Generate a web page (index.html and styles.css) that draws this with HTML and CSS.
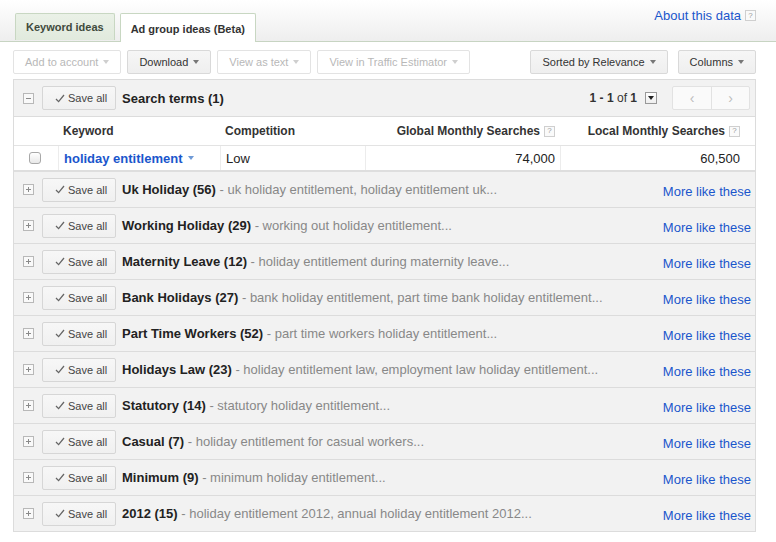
FILE: index.html
```html
<!DOCTYPE html>
<html>
<head>
<meta charset="utf-8">
<link rel="stylesheet" href="styles.css">
</head>
<body>
<div class="topbar">
  <div class="tabs">
    <div class="tab">Keyword ideas</div>
    <div class="tab active">Ad group ideas (Beta)</div>
  </div>
  <div class="about"><a class="link">About this data</a><span class="help">?</span></div>
</div>

<div class="toolbar">
  <span class="btn disabled">Add to account <i class="caret"></i></span>
  <span class="btn">Download <i class="caret"></i></span>
  <span class="btn disabled">View as text <i class="caret"></i></span>
  <span class="btn disabled">View in Traffic Estimator <i class="caret"></i></span>
  <span class="btn push">Sorted by Relevance <i class="caret"></i></span>
  <span class="btn wide-gap">Columns <i class="caret"></i></span>
</div>

<div class="panel">
  <div class="ghead">
    <svg class="pm" width="11" height="11" viewBox="0 0 11 11"><rect x="0.5" y="0.5" width="10" height="10" fill="#f9f9f9" stroke="#b8b8b8"/><path d="M3 5.5h5" stroke="#8a8a8a"/></svg>
    <span class="save"><svg width="10" height="9" viewBox="0 0 10 9"><path d="M1 5l2.6 2.6L9 1" fill="none" stroke="#666" stroke-width="1.3"/></svg>Save all</span>
    <span class="gtitle">Search terms (1)</span>
    <span class="pages"><b>1 - 1</b> of <b>1</b></span>
    <span class="ddbox"><i></i></span>
    <span class="pager"><span>&#8249;</span><span>&#8250;</span></span>
  </div>

  <div class="thead">
    <div class="c c1"></div>
    <div class="c c2">Keyword</div>
    <div class="c c3">Competition</div>
    <div class="c c4">Global Monthly Searches <span class="help">?</span></div>
    <div class="c c5">Local Monthly Searches <span class="help">?</span></div>
  </div>

  <div class="trow">
    <div class="c c1"><span class="cb"></span></div>
    <div class="c c2"><span class="kw">holiday entitlement</span><i class="kcaret"></i></div>
    <div class="c c3">Low</div>
    <div class="c c4">74,000</div>
    <div class="c c5">60,500</div>
  </div>

  <div class="group">
    <svg class="pm" width="11" height="11" viewBox="0 0 11 11"><rect x="0.5" y="0.5" width="10" height="10" fill="#f9f9f9" stroke="#b8b8b8"/><path d="M3 5.5h5M5.5 3v5" stroke="#8a8a8a"/></svg>
    <span class="save"><svg width="10" height="9" viewBox="0 0 10 9"><path d="M1 5l2.6 2.6L9 1" fill="none" stroke="#666" stroke-width="1.3"/></svg>Save all</span>
    <span class="gtitle">Uk Holiday (56)</span><span class="desc">&nbsp;- uk holiday entitlement, holiday entitlement uk...</span>
    <a class="link more">More like these</a>
  </div>
  <div class="group">
    <svg class="pm" width="11" height="11" viewBox="0 0 11 11"><rect x="0.5" y="0.5" width="10" height="10" fill="#f9f9f9" stroke="#b8b8b8"/><path d="M3 5.5h5M5.5 3v5" stroke="#8a8a8a"/></svg>
    <span class="save"><svg width="10" height="9" viewBox="0 0 10 9"><path d="M1 5l2.6 2.6L9 1" fill="none" stroke="#666" stroke-width="1.3"/></svg>Save all</span>
    <span class="gtitle">Working Holiday (29)</span><span class="desc">&nbsp;- working out holiday entitlement...</span>
    <a class="link more">More like these</a>
  </div>
  <div class="group">
    <svg class="pm" width="11" height="11" viewBox="0 0 11 11"><rect x="0.5" y="0.5" width="10" height="10" fill="#f9f9f9" stroke="#b8b8b8"/><path d="M3 5.5h5M5.5 3v5" stroke="#8a8a8a"/></svg>
    <span class="save"><svg width="10" height="9" viewBox="0 0 10 9"><path d="M1 5l2.6 2.6L9 1" fill="none" stroke="#666" stroke-width="1.3"/></svg>Save all</span>
    <span class="gtitle">Maternity Leave (12)</span><span class="desc">&nbsp;- holiday entitlement during maternity leave...</span>
    <a class="link more">More like these</a>
  </div>
  <div class="group">
    <svg class="pm" width="11" height="11" viewBox="0 0 11 11"><rect x="0.5" y="0.5" width="10" height="10" fill="#f9f9f9" stroke="#b8b8b8"/><path d="M3 5.5h5M5.5 3v5" stroke="#8a8a8a"/></svg>
    <span class="save"><svg width="10" height="9" viewBox="0 0 10 9"><path d="M1 5l2.6 2.6L9 1" fill="none" stroke="#666" stroke-width="1.3"/></svg>Save all</span>
    <span class="gtitle">Bank Holidays (27)</span><span class="desc">&nbsp;- bank holiday entitlement, part time bank holiday entitlement...</span>
    <a class="link more">More like these</a>
  </div>
  <div class="group">
    <svg class="pm" width="11" height="11" viewBox="0 0 11 11"><rect x="0.5" y="0.5" width="10" height="10" fill="#f9f9f9" stroke="#b8b8b8"/><path d="M3 5.5h5M5.5 3v5" stroke="#8a8a8a"/></svg>
    <span class="save"><svg width="10" height="9" viewBox="0 0 10 9"><path d="M1 5l2.6 2.6L9 1" fill="none" stroke="#666" stroke-width="1.3"/></svg>Save all</span>
    <span class="gtitle">Part Time Workers (52)</span><span class="desc">&nbsp;- part time workers holiday entitlement...</span>
    <a class="link more">More like these</a>
  </div>
  <div class="group">
    <svg class="pm" width="11" height="11" viewBox="0 0 11 11"><rect x="0.5" y="0.5" width="10" height="10" fill="#f9f9f9" stroke="#b8b8b8"/><path d="M3 5.5h5M5.5 3v5" stroke="#8a8a8a"/></svg>
    <span class="save"><svg width="10" height="9" viewBox="0 0 10 9"><path d="M1 5l2.6 2.6L9 1" fill="none" stroke="#666" stroke-width="1.3"/></svg>Save all</span>
    <span class="gtitle">Holidays Law (23)</span><span class="desc">&nbsp;- holiday entitlement law, employment law holiday entitlement...</span>
    <a class="link more">More like these</a>
  </div>
  <div class="group">
    <svg class="pm" width="11" height="11" viewBox="0 0 11 11"><rect x="0.5" y="0.5" width="10" height="10" fill="#f9f9f9" stroke="#b8b8b8"/><path d="M3 5.5h5M5.5 3v5" stroke="#8a8a8a"/></svg>
    <span class="save"><svg width="10" height="9" viewBox="0 0 10 9"><path d="M1 5l2.6 2.6L9 1" fill="none" stroke="#666" stroke-width="1.3"/></svg>Save all</span>
    <span class="gtitle">Statutory (14)</span><span class="desc">&nbsp;- statutory holiday entitlement...</span>
    <a class="link more">More like these</a>
  </div>
  <div class="group">
    <svg class="pm" width="11" height="11" viewBox="0 0 11 11"><rect x="0.5" y="0.5" width="10" height="10" fill="#f9f9f9" stroke="#b8b8b8"/><path d="M3 5.5h5M5.5 3v5" stroke="#8a8a8a"/></svg>
    <span class="save"><svg width="10" height="9" viewBox="0 0 10 9"><path d="M1 5l2.6 2.6L9 1" fill="none" stroke="#666" stroke-width="1.3"/></svg>Save all</span>
    <span class="gtitle">Casual (7)</span><span class="desc">&nbsp;- holiday entitlement for casual workers...</span>
    <a class="link more">More like these</a>
  </div>
  <div class="group">
    <svg class="pm" width="11" height="11" viewBox="0 0 11 11"><rect x="0.5" y="0.5" width="10" height="10" fill="#f9f9f9" stroke="#b8b8b8"/><path d="M3 5.5h5M5.5 3v5" stroke="#8a8a8a"/></svg>
    <span class="save"><svg width="10" height="9" viewBox="0 0 10 9"><path d="M1 5l2.6 2.6L9 1" fill="none" stroke="#666" stroke-width="1.3"/></svg>Save all</span>
    <span class="gtitle">Minimum (9)</span><span class="desc">&nbsp;- minimum holiday entitlement...</span>
    <a class="link more">More like these</a>
  </div>
  <div class="group">
    <svg class="pm" width="11" height="11" viewBox="0 0 11 11"><rect x="0.5" y="0.5" width="10" height="10" fill="#f9f9f9" stroke="#b8b8b8"/><path d="M3 5.5h5M5.5 3v5" stroke="#8a8a8a"/></svg>
    <span class="save"><svg width="10" height="9" viewBox="0 0 10 9"><path d="M1 5l2.6 2.6L9 1" fill="none" stroke="#666" stroke-width="1.3"/></svg>Save all</span>
    <span class="gtitle">2012 (15)</span><span class="desc">&nbsp;- holiday entitlement 2012, annual holiday entitlement 2012...</span>
    <a class="link more">More like these</a>
  </div>
</div>
</body>
</html>
```

FILE: styles.css
```css
* { box-sizing: border-box; }
html, body { margin: 0; padding: 0; background: #fff; }
body {
  width: 776px;
  font-family: "Liberation Sans", Arial, sans-serif;
  font-size: 13px;
  color: #222;
}
.link { color: #1a56cc; text-decoration: none; }

.topbar {
  height: 42px;
  display: flex;
  align-items: flex-end;
  padding-left: 15px;
  background: linear-gradient(#ffffff, #eeeeee);
  border-bottom: 1px solid #c7d4c2;
}
.tabs { display: flex; gap: 5px; }
.tab {
  height: 27px;
  padding: 0 10px;
  display: flex;
  align-items: center;
  font-size: 11px;
  font-weight: bold;
  color: #3f4a3c;
  background: linear-gradient(#eaf1e7, #e1eadd);
  border: 1px solid #c8d7c2;
  border-bottom: none;
  border-radius: 2px 2px 0 0;
}
.tab.active {
  height: 29px;
  margin-bottom: -1px;
  padding: 1px 10px 0;
  background: #fff;
  color: #333;
}
.about {
  margin-left: auto;
  align-self: flex-start;
  margin-top: 8px;
  margin-right: 20px;
  display: flex;
  align-items: center;
  font-size: 13px;
}
.help {
  display: inline-flex;
  align-items: center;
  justify-content: center;
  width: 11px;
  height: 11px;
  border: 1px solid #cfcfcf;
  background: #fafafa;
  color: #9a9a9a;
  font-size: 8px;
  font-weight: normal;
  line-height: 1;
  margin-left: 4px;
}

.toolbar {
  display: flex;
  margin-top: 8px;
  padding: 0 20px 0 13px;
  gap: 6px;
  height: 24px;
}
.btn {
  display: flex;
  align-items: center;
  gap: 5px;
  padding: 0 11px;
  height: 24px;
  font-size: 11px;
  color: #333;
  background: linear-gradient(#f6f6f6, #efefef);
  border: 1px solid #d9d9d9;
  border-radius: 2px;
}
.btn.disabled {
  color: #b8b8b8;
  background: #fff;
  border-color: #e3e3e3;
}
.caret {
  display: inline-block;
  width: 0; height: 0;
  border-left: 3.5px solid transparent;
  border-right: 3.5px solid transparent;
  border-top: 4px solid #777;
}
.btn.disabled .caret { border-top-color: #cfcfcf; }
.btn.push { margin-left: auto; }
.btn.wide-gap { margin-left: 4px; }

.panel {
  margin: 5px 20px 0 13px;
  border: 1px solid #dcdcdc;
  border-bottom: none;
}
.ghead, .group {
  display: flex;
  align-items: center;
  height: 36px;
  background: #f2f2f2;
  border-bottom: 1px solid #dcdcdc;
  padding-left: 9px;
  padding-right: 4px;
}
.ghead { height: 37px; }
.pm { flex: none; margin-right: 8px; }
.save {
  display: flex;
  align-items: center;
  gap: 3px;
  height: 24px;
  width: 74px;
  padding-left: 12px;
  font-size: 11px;
  color: #444;
  background: linear-gradient(#f7f7f7, #f0f0f0);
  border: 1px solid #d6d6d6;
  border-radius: 2px;
  flex: none;
}
.gtitle { margin-left: 6px; font-weight: bold; color: #222; white-space: nowrap; }
.desc { color: #888; white-space: nowrap; }
.more { margin-left: auto; padding-top: 3px; }

.pages { margin-left: auto; font-size: 12px; color: #333; }
.ddbox {
  width: 12px; height: 12px;
  margin-left: 8px;
  border: 1px solid #999;
  background: linear-gradient(#fff, #eee);
  display: flex; align-items: center; justify-content: center;
}
.ddbox i {
  width: 0; height: 0;
  border-left: 3px solid transparent;
  border-right: 3px solid transparent;
  border-top: 4px solid #222;
}
.pager {
  display: flex;
  margin-left: 15px;
  margin-right: 1px;
  height: 24px;
  border: 1px solid #e2e2e2;
  border-radius: 2px;
  background: #fafafa;
}
.pager span {
  width: 38px;
  display: flex; align-items: center; justify-content: center;
  color: #bdbdbd;
  font-size: 14px;
}
.pager span + span { border-left: 1px solid #e2e2e2; }

.thead, .trow {
  display: grid;
  grid-template-columns: 44px 162px 145px 195px 1fr;
  background: #fff;
}
.thead {
  height: 29px;
  border-bottom: 1px solid #e3e3e3;
  font-size: 12px;
  font-weight: bold;
  color: #333;
}
.trow {
  height: 26px;
  border-bottom: 2px solid #dedede;
}
.c { display: flex; align-items: center; padding: 0 5px; white-space: nowrap; }
.c4, .c5 { justify-content: flex-end; }
.c5 { padding-right: 15px; }
.trow .c + .c { border-left: 1px solid #ececec; }
.cb {
  width: 12px; height: 12px;
  margin-left: 10px;
  border: 1px solid #a8a8a8;
  border-radius: 3px;
  background: linear-gradient(#fff, #e8e8e8);
}
.kw { color: #1a56cc; font-weight: bold; }
.kcaret {
  display: inline-block;
  margin-left: 6px;
  width: 0; height: 0;
  border-left: 3.5px solid transparent;
  border-right: 3.5px solid transparent;
  border-top: 4px solid #6f9ad6;
}
```
